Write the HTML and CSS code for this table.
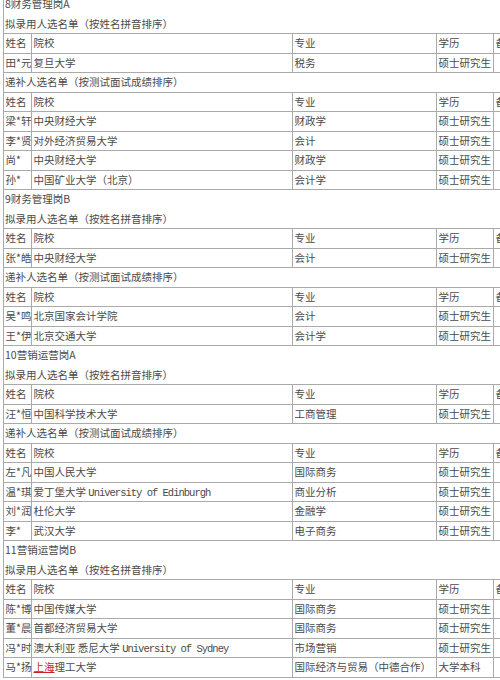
FILE: index.html
```html
<!DOCTYPE html>
<html lang="zh">
<head>
<meta charset="utf-8">
<title>拟录用人选名单</title>
<link rel="stylesheet" href="styles.css">
</head>
<body>
<div class="sheet">
  <div class="row title">8财务管理岗A</div>
  <div class="row list">拟录用人选名单（按姓名拼音排序）</div>
  <div class="row grid"><span class="c1">姓名</span><span class="c2">院校</span><span class="c3">专业</span><span class="c4">学历</span><span class="c5">备注</span></div>
  <div class="row grid"><span class="c1">田*元</span><span class="c2">复旦大学</span><span class="c3">税务</span><span class="c4">硕士研究生</span><span class="c5"></span></div>
  <div class="row list">递补人选名单（按测试面试成绩排序）</div>
  <div class="row grid"><span class="c1">姓名</span><span class="c2">院校</span><span class="c3">专业</span><span class="c4">学历</span><span class="c5">备注</span></div>
  <div class="row grid"><span class="c1">梁*轩</span><span class="c2">中央财经大学</span><span class="c3">财政学</span><span class="c4">硕士研究生</span><span class="c5"></span></div>
  <div class="row grid"><span class="c1">李*贤</span><span class="c2">对外经济贸易大学</span><span class="c3">会计</span><span class="c4">硕士研究生</span><span class="c5"></span></div>
  <div class="row grid"><span class="c1">尚*</span><span class="c2">中央财经大学</span><span class="c3">财政学</span><span class="c4">硕士研究生</span><span class="c5"></span></div>
  <div class="row grid"><span class="c1">孙*</span><span class="c2">中国矿业大学（北京）</span><span class="c3">会计学</span><span class="c4">硕士研究生</span><span class="c5"></span></div>

  <div class="row title">9财务管理岗B</div>
  <div class="row list">拟录用人选名单（按姓名拼音排序）</div>
  <div class="row grid"><span class="c1">姓名</span><span class="c2">院校</span><span class="c3">专业</span><span class="c4">学历</span><span class="c5">备注</span></div>
  <div class="row grid"><span class="c1">张*皓</span><span class="c2">中央财经大学</span><span class="c3">会计</span><span class="c4">硕士研究生</span><span class="c5"></span></div>
  <div class="row list">递补人选名单（按测试面试成绩排序）</div>
  <div class="row grid"><span class="c1">姓名</span><span class="c2">院校</span><span class="c3">专业</span><span class="c4">学历</span><span class="c5">备注</span></div>
  <div class="row grid"><span class="c1">吴*鸣</span><span class="c2">北京国家会计学院</span><span class="c3">会计</span><span class="c4">硕士研究生</span><span class="c5"></span></div>
  <div class="row grid"><span class="c1">王*伊</span><span class="c2">北京交通大学</span><span class="c3">会计学</span><span class="c4">硕士研究生</span><span class="c5"></span></div>

  <div class="row title">10营销运营岗A</div>
  <div class="row list">拟录用人选名单（按姓名拼音排序）</div>
  <div class="row grid"><span class="c1">姓名</span><span class="c2">院校</span><span class="c3">专业</span><span class="c4">学历</span><span class="c5">备注</span></div>
  <div class="row grid"><span class="c1">汪*恒</span><span class="c2">中国科学技术大学</span><span class="c3">工商管理</span><span class="c4">硕士研究生</span><span class="c5"></span></div>
  <div class="row list">递补人选名单（按测试面试成绩排序）</div>
  <div class="row grid"><span class="c1">姓名</span><span class="c2">院校</span><span class="c3">专业</span><span class="c4">学历</span><span class="c5">备注</span></div>
  <div class="row grid"><span class="c1">左*凡</span><span class="c2">中国人民大学</span><span class="c3">国际商务</span><span class="c4">硕士研究生</span><span class="c5"></span></div>
  <div class="row grid"><span class="c1">温*琪</span><span class="c2">爱丁堡大学 <span class="lat">University of Edinburgh</span></span><span class="c3">商业分析</span><span class="c4">硕士研究生</span><span class="c5"></span></div>
  <div class="row grid"><span class="c1">刘*润</span><span class="c2">杜伦大学</span><span class="c3">金融学</span><span class="c4">硕士研究生</span><span class="c5"></span></div>
  <div class="row grid"><span class="c1">李*</span><span class="c2">武汉大学</span><span class="c3">电子商务</span><span class="c4">硕士研究生</span><span class="c5"></span></div>

  <div class="row title">11营销运营岗B</div>
  <div class="row list">拟录用人选名单（按姓名拼音排序）</div>
  <div class="row grid"><span class="c1">姓名</span><span class="c2">院校</span><span class="c3">专业</span><span class="c4">学历</span><span class="c5">备注</span></div>
  <div class="row grid"><span class="c1">陈*博</span><span class="c2">中国传媒大学</span><span class="c3">国际商务</span><span class="c4">硕士研究生</span><span class="c5"></span></div>
  <div class="row grid"><span class="c1">董*晨</span><span class="c2">首都经济贸易大学</span><span class="c3">国际商务</span><span class="c4">硕士研究生</span><span class="c5"></span></div>
  <div class="row grid"><span class="c1">冯*时</span><span class="c2">澳大利亚 悉尼大学 <span class="lat">University of Sydney</span></span><span class="c3">市场营销</span><span class="c4">硕士研究生</span><span class="c5"></span></div>
  <div class="row grid"><span class="c1">马*扬</span><span class="c2"><span class="mark">上海</span>理工大学</span><span class="c3">国际经济与贸易（中德合作）</span><span class="c4">大学本科</span><span class="c5"></span></div>
</div>
</body>
</html>
```

FILE: styles.css
```css
html, body {
  margin: 0;
  padding: 0;
  background: #ffffff;
  overflow: hidden;
}

body {
  width: 500px;
  height: 680px;
  font-family: "Noto Sans CJK SC", "Noto Sans", sans-serif;
  font-size: 10.5px;
  color: #4a4a4a;
}

.sheet {
  margin: -5px 0 0 3px;
  border-left: 1px solid #aaaaaa;
  width: 560px;
}

.row {
  box-sizing: border-box;
  height: 19.5px;
  line-height: 18px;
  white-space: nowrap;
}

.title {
  padding-left: 1px;
}

.list {
  padding-left: 1px;
  border-bottom: 1px solid #aaaaaa;
}

.grid {
  display: flex;
  border-bottom: 1px solid #aaaaaa;
}

.grid > span {
  box-sizing: border-box;
  flex: none;
  height: 100%;
  padding-left: 1.5px;
  border-right: 1px solid #aaaaaa;
  overflow: hidden;
}

.c1 { width: 28px; }
.c2 { width: 261px; }
.c3 { width: 144px; }
.c4 { width: 57px; }
.grid > .c5 { width: 70px; border-right: none; }

.lat {
  font-family: "Liberation Mono", monospace;
  letter-spacing: -1px;
}

.mark {
  color: #cc2222;
  text-decoration: underline;
  text-decoration-color: #cc2222;
}
```
